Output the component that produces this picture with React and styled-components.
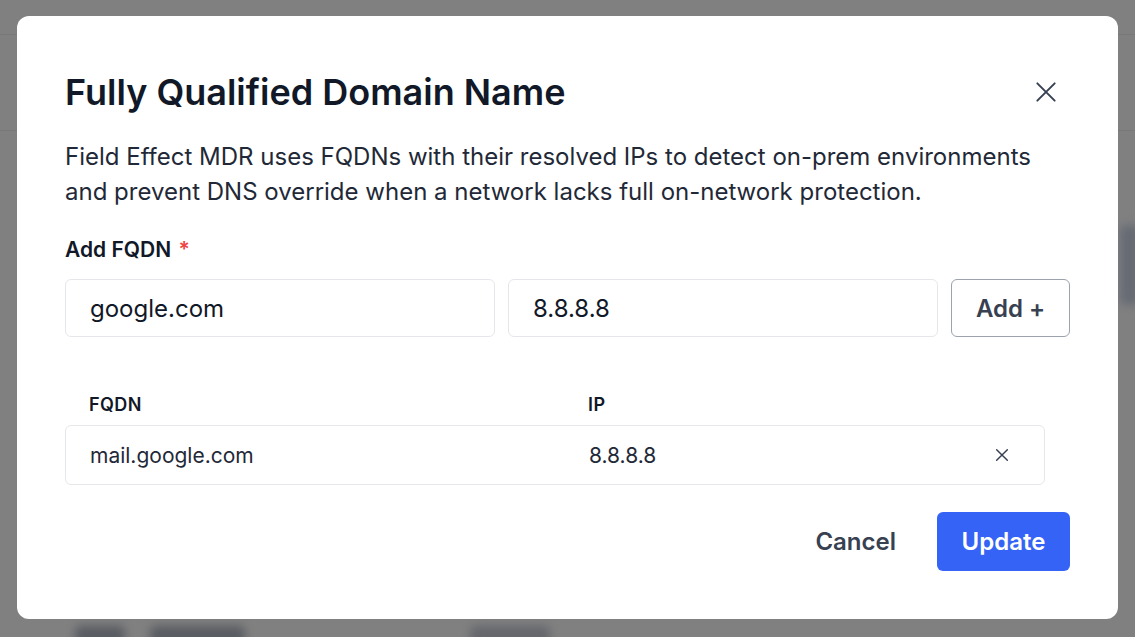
import React from "react";
import styled, { createGlobalStyle } from "styled-components";

const GlobalStyle = createGlobalStyle`
  html, body { margin: 0; padding: 0; }
  body {
    width: 1135px;
    height: 637px;
    overflow: hidden;
    font-family: Inter, "Noto Sans", "Liberation Sans", sans-serif;
    background: #808080;
  }
  * { box-sizing: border-box; }
`;

const Backdrop = styled.div`
  position: relative;
  width: 1135px;
  height: 637px;
  background: #808080;
  overflow: hidden;
`;

const BackdropLine = styled.div`
  position: absolute;
  left: 0;
  right: 0;
  top: ${(p) => p.$top}px;
  height: 1px;
  background: rgba(0, 0, 0, 0.06);
`;

const Blob = styled.div`
  position: absolute;
  left: ${(p) => p.$x}px;
  top: ${(p) => p.$y}px;
  width: ${(p) => p.$w}px;
  height: ${(p) => p.$h}px;
  border-radius: 6px;
  background: ${(p) => p.$c || "#4b4f57"};
  filter: blur(5px);
  opacity: 0.75;
`;

const Modal = styled.div`
  position: absolute;
  left: 17px;
  top: 16px;
  width: 1101px;
  height: 603px;
  background: #ffffff;
  border-radius: 12px;
  padding: 52px 48px 48px 48px;
  display: flex;
  flex-direction: column;
`;

const Header = styled.div`
  display: flex;
  align-items: center;
  justify-content: space-between;
  height: 48px;
`;

const Title = styled.h2`
  margin: 0;
  font-size: 36px;
  line-height: 44px;
  font-weight: 600;
  color: #111827;
`;

const CloseButton = styled.button`
  display: flex;
  align-items: center;
  justify-content: center;
  width: 32px;
  height: 32px;
  margin-right: 8px;
  padding: 0;
  border: none;
  background: transparent;
  color: #374151;
  cursor: pointer;
`;

const Description = styled.p`
  margin: 23px 0 0 0;
  font-size: 24px;
  line-height: 35px;
  color: #1f2937;
  font-weight: 400;
  white-space: nowrap;
`;

const Label = styled.label`
  display: block;
  margin-top: 28px;
  font-size: 21px;
  line-height: 26px;
  font-weight: 600;
  color: #111827;
`;

const Required = styled.span`
  color: #ef4444;
  margin-left: 2px;
`;

const InputRow = styled.div`
  display: grid;
  grid-template-columns: 1fr 1fr 119px;
  gap: 13px;
  margin-top: 16px;
`;

const TextInput = styled.input`
  height: 58px;
  border: 1px solid #e5e7eb;
  border-radius: 6px;
  padding: 0 24px;
  font-family: inherit;
  font-size: 24px;
  color: #111827;
  background: #fff;
  outline: none;
  min-width: 0;
`;

const OutlineButton = styled.button`
  height: 58px;
  border: 1px solid #9ca3af;
  border-radius: 6px;
  background: #fff;
  font-family: inherit;
  font-size: 24px;
  font-weight: 600;
  color: #374151;
  cursor: pointer;
`;

const Table = styled.div`
  width: 980px;
  margin-top: 58px;
  display: flex;
  flex-direction: column;
  gap: 10px;
`;

const HeadRow = styled.div`
  display: grid;
  grid-template-columns: 499px 1fr 40px;
  padding: 0 24px;
  font-size: 18px;
  line-height: 20px;
  font-weight: 600;
  color: #111827;
  letter-spacing: 0.4px;
`;

const BodyRow = styled.div`
  display: grid;
  grid-template-columns: 499px 1fr 40px;
  align-items: center;
  height: 60px;
  padding: 0 24px;
  border: 1px solid #e5e7eb;
  border-radius: 6px;
  font-size: 21px;
  color: #1f2937;
`;

const RemoveButton = styled.button`
  display: flex;
  align-items: center;
  justify-content: center;
  width: 24px;
  height: 24px;
  padding: 0;
  margin-left: 10px;
  border: none;
  background: transparent;
  color: #374151;
  cursor: pointer;
`;

const Footer = styled.div`
  margin-top: 27px;
  display: flex;
  justify-content: flex-end;
  gap: 20px;
`;

const GhostButton = styled.button`
  height: 59px;
  padding: 0 21px;
  border: none;
  background: transparent;
  font-family: inherit;
  font-size: 24px;
  font-weight: 600;
  color: #374151;
  cursor: pointer;
`;

const PrimaryButton = styled.button`
  height: 59px;
  width: 133px;
  border: none;
  border-radius: 6px;
  background: #3563f6;
  font-family: inherit;
  font-size: 24px;
  font-weight: 600;
  color: #ffffff;
  cursor: pointer;
`;

const XIcon = ({ size, stroke = 2 }) => (
  <svg width={size} height={size} viewBox="0 0 24 24" fill="none" stroke="currentColor" strokeWidth={stroke} strokeLinecap="round">
    <path d="M4 4L20 20M20 4L4 20" />
  </svg>
);

export default function App() {
  return (
    <>
      <GlobalStyle />
      <Backdrop>
        <BackdropLine $top={34} />
        <BackdropLine $top={130} />
        <Blob $x={75} $y={626} $w={50} $h={18} />
        <Blob $x={150} $y={626} $w={95} $h={18} />
        <Blob $x={470} $y={626} $w={80} $h={18} $c="#5b5e66" />
        <Blob $x={1120} $y={225} $w={20} $h={80} $c="#5d6470" />
        <Modal role="dialog" aria-modal="true">
          <Header>
            <Title>Fully Qualified Domain Name</Title>
            <CloseButton aria-label="Close">
              <XIcon size={26} stroke={1.8} />
            </CloseButton>
          </Header>
          <Description>
            Field Effect MDR uses FQDNs with their resolved IPs to detect on-prem environments
            <br />
            and prevent DNS override when a network lacks full on-network protection.
          </Description>
          <Label>
            Add FQDN <Required>*</Required>
          </Label>
          <InputRow>
            <TextInput defaultValue="google.com" />
            <TextInput defaultValue="8.8.8.8" />
            <OutlineButton>Add +</OutlineButton>
          </InputRow>
          <Table>
            <HeadRow>
              <span>FQDN</span>
              <span>IP</span>
              <span />
            </HeadRow>
            <BodyRow>
              <span>mail.google.com</span>
              <span>8.8.8.8</span>
              <RemoveButton aria-label="Remove">
                <XIcon size={16} stroke={2.2} />
              </RemoveButton>
            </BodyRow>
          </Table>
          <Footer>
            <GhostButton>Cancel</GhostButton>
            <PrimaryButton>Update</PrimaryButton>
          </Footer>
        </Modal>
      </Backdrop>
    </>
  );
}
